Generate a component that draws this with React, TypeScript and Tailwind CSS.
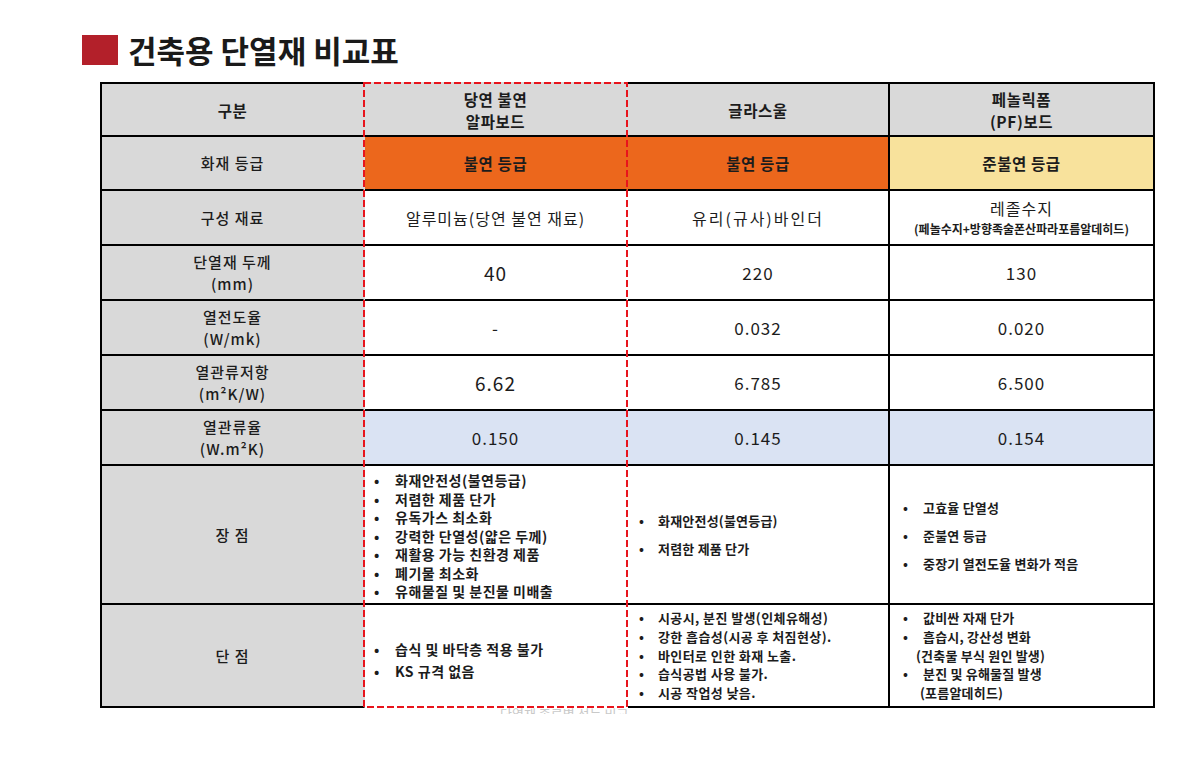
import { ReactNode } from "react";

const GRAY = "bg-[#d9d9d9]";
const ORANGE = "bg-[#ec671c]";
const YELLOW = "bg-[#f8e29c]";
const BLUE = "bg-[#dae3f3]";
const WHITE = "bg-white";

// borders per column; col 1 and col 2 share the red dashed frame instead of black lines
const colBorders = [
  "border-l-2 border-l-black border-r-2 border-r-transparent",
  "border-r-2 border-r-transparent",
  "border-r-2 border-r-black",
  "border-r-2 border-r-black",
];

interface CellProps {
  col: number;
  row: number;
  bg: string;
  children?: ReactNode;
  className?: string;
}

const LAST_ROW = 8;

function Cell({ col, row, bg, children, className = "" }: CellProps) {
  const top =
    row === 0 ? (col === 1 ? "border-t-2 border-t-transparent" : "border-t-2 border-t-black") : "";
  const bottom =
    row === LAST_ROW && col === 1 ? "border-b-2 border-b-transparent" : "border-b-2 border-b-black";
  return (
    <div
      className={`box-border flex items-center justify-center text-center text-[#1c1c1c] ${bg} ${colBorders[col]} ${top} ${bottom} ${className}`}
    >
      {children}
    </div>
  );
}

function Label({ children }: { children: ReactNode }) {
  return <div className="text-[15px] leading-[22px] font-medium tracking-[1px]">{children}</div>;
}

function Head({ children }: { children: ReactNode }) {
  return <div className="text-[15.5px] leading-[22px] font-bold tracking-[0.6px]">{children}</div>;
}

function Value({ children, big = false }: { children: ReactNode; big?: boolean }) {
  return (
    <div className={`${big ? "text-[19px]" : "text-[17px]"} leading-[20px] tracking-[1px]`}>
      {children}
    </div>
  );
}

function BulletList({
  items,
  gap,
  lineHeight,
  bulletWidth,
  size = "text-[13px] tracking-[0.2px]",
}: {
  items: { text: string; sub?: string; subIndent?: string }[];
  gap: string;
  lineHeight: string;
  bulletWidth: string;
  size?: string;
}) {
  return (
    <div className={`flex flex-col ${gap} text-left ${size} font-semibold ${lineHeight}`}>
      {items.map((it) => (
        <div key={it.text}>
          <div className="flex">
            <span className={`${bulletWidth} shrink-0 tracking-normal`}>•</span>
            <span>{it.text}</span>
          </div>
          {it.sub && <div className={it.subIndent}>{it.sub}</div>}
        </div>
      ))}
    </div>
  );
}

export default function App() {
  return (
    <div className="w-[1200px] h-[766px] overflow-hidden bg-white font-['Noto_Sans_CJK_KR','Noto_Sans',sans-serif]">
      <div className="pt-[35px] pl-[82px] flex items-center gap-[10px]">
        <div className="w-[36px] h-[30px] bg-[#b3202a]" />
        <h1 className="text-[31px] leading-[30px] font-bold text-[#1a1a1a]">건축용 단열재 비교표</h1>
      </div>

      <div className="relative mt-[17px] ml-[100px] w-[1055px]">
        <div className="grid grid-cols-[265px_263px_262px_265px] grid-rows-[55px_54px_55px_55px_55px_55px_55px_139px_103px]">
          {/* 구분 */}
          <Cell col={0} row={0} bg={GRAY}>
            <Head>구분</Head>
          </Cell>
          <Cell col={1} row={0} bg={GRAY}>
            <Head>
              당연 불연
              <br />
              알파보드
            </Head>
          </Cell>
          <Cell col={2} row={0} bg={GRAY}>
            <Head>글라스울</Head>
          </Cell>
          <Cell col={3} row={0} bg={GRAY}>
            <Head>
              페놀릭폼
              <br />
              (PF)보드
            </Head>
          </Cell>

          {/* 화재 등급 */}
          <Cell col={0} row={1} bg={GRAY}>
            <Label>화재 등급</Label>
          </Cell>
          <Cell col={1} row={1} bg={ORANGE}>
            <Head>불연 등급</Head>
          </Cell>
          <Cell col={2} row={1} bg={ORANGE}>
            <Head>불연 등급</Head>
          </Cell>
          <Cell col={3} row={1} bg={YELLOW}>
            <Head>준불연 등급</Head>
          </Cell>

          {/* 구성 재료 */}
          <Cell col={0} row={2} bg={GRAY}>
            <Label>구성 재료</Label>
          </Cell>
          <Cell col={1} row={2} bg={WHITE}>
            <div className="text-[16px] tracking-[1px]">알루미늄(당연 불연 재료)</div>
          </Cell>
          <Cell col={2} row={2} bg={WHITE}>
            <div className="text-[16px] tracking-[2px]">유리(규사)바인더</div>
          </Cell>
          <Cell col={3} row={2} bg={WHITE}>
            <div>
              <div className="text-[16px] leading-[23px] tracking-[1px]">레졸수지</div>
              <div className="text-[12px] leading-[18px] font-bold">(페놀수지+방향족술폰산파라포름알데히드)</div>
            </div>
          </Cell>

          {/* 단열재 두께 */}
          <Cell col={0} row={3} bg={GRAY}>
            <Label>
              단열재 두께
              <br />
              (mm)
            </Label>
          </Cell>
          <Cell col={1} row={3} bg={WHITE}>
            <Value big>40</Value>
          </Cell>
          <Cell col={2} row={3} bg={WHITE}>
            <Value>220</Value>
          </Cell>
          <Cell col={3} row={3} bg={WHITE}>
            <Value>130</Value>
          </Cell>

          {/* 열전도율 */}
          <Cell col={0} row={4} bg={GRAY}>
            <Label>
              열전도율
              <br />
              (W/mk)
            </Label>
          </Cell>
          <Cell col={1} row={4} bg={WHITE}>
            <Value>-</Value>
          </Cell>
          <Cell col={2} row={4} bg={WHITE}>
            <Value>0.032</Value>
          </Cell>
          <Cell col={3} row={4} bg={WHITE}>
            <Value>0.020</Value>
          </Cell>

          {/* 열관류저항 */}
          <Cell col={0} row={5} bg={GRAY}>
            <Label>
              열관류저항
              <br />
              (m²K/W)
            </Label>
          </Cell>
          <Cell col={1} row={5} bg={WHITE}>
            <Value big>6.62</Value>
          </Cell>
          <Cell col={2} row={5} bg={WHITE}>
            <Value>6.785</Value>
          </Cell>
          <Cell col={3} row={5} bg={WHITE}>
            <Value>6.500</Value>
          </Cell>

          {/* 열관류율 */}
          <Cell col={0} row={6} bg={GRAY}>
            <Label>
              열관류율
              <br />
              (W.m²K)
            </Label>
          </Cell>
          <Cell col={1} row={6} bg={BLUE}>
            <Value>0.150</Value>
          </Cell>
          <Cell col={2} row={6} bg={BLUE}>
            <Value>0.145</Value>
          </Cell>
          <Cell col={3} row={6} bg={BLUE}>
            <Value>0.154</Value>
          </Cell>

          {/* 장점 */}
          <Cell col={0} row={7} bg={GRAY}>
            <Label>장 점</Label>
          </Cell>
          <Cell col={1} row={7} bg={WHITE} className="!justify-start pl-[9px] pt-[3px]">
            <BulletList
              gap="gap-0"
              lineHeight="leading-[18.5px]"
              bulletWidth="w-[21px]"
              size="text-[14px] tracking-[0.5px]"
              items={[
                { text: "화재안전성(불연등급)" },
                { text: "저렴한 제품 단가" },
                { text: "유독가스 최소화" },
                { text: "강력한 단열성(얇은 두께)" },
                { text: "재활용 가능 친환경 제품" },
                { text: "폐기물 최소화" },
                { text: "유해물질 및 분진물 미배출" },
              ]}
            />
          </Cell>
          <Cell col={2} row={7} bg={WHITE} className="!justify-start pl-[11px]">
            <BulletList
              gap="gap-[10px]"
              lineHeight="leading-[18px]"
              bulletWidth="w-[19px]"
              items={[{ text: "화재안전성(불연등급)" }, { text: "저렴한 제품 단가" }]}
            />
          </Cell>
          <Cell col={3} row={7} bg={WHITE} className="!justify-start pl-[13px] pt-[2px]">
            <BulletList
              gap="gap-[10px]"
              lineHeight="leading-[18px]"
              bulletWidth="w-[20px]"
              items={[
                { text: "고효율 단열성" },
                { text: "준불연 등급" },
                { text: "중장기 열전도율 변화가 적음" },
              ]}
            />
          </Cell>

          {/* 단점 */}
          <Cell col={0} row={8} bg={GRAY}>
            <Label>단 점</Label>
          </Cell>
          <Cell col={1} row={8} bg={WHITE} className="!justify-start pl-[9px] pt-[8px]">
            <BulletList
              gap="gap-[4px]"
              lineHeight="leading-[18px]"
              bulletWidth="w-[21px]"
              size="text-[14px] tracking-[0.5px]"
              items={[{ text: "습식 및 바닥층 적용 불가" }, { text: "KS 규격 없음" }]}
            />
          </Cell>
          <Cell col={2} row={8} bg={WHITE} className="!justify-start pl-[11px] pt-[1px]">
            <BulletList
              gap="gap-0"
              lineHeight="leading-[18.8px]"
              bulletWidth="w-[19px]"
              size="text-[13px] tracking-[0.4px]"
              items={[
                { text: "시공시, 분진 발생(인체유해성)" },
                { text: "강한 흡습성(시공 후 처짐현상)." },
                { text: "바인터로 인한 화재 노출." },
                { text: "습식공법 사용 불가." },
                { text: "시공 작업성 낮음." },
              ]}
            />
          </Cell>
          <Cell col={3} row={8} bg={WHITE} className="!justify-start pl-[13px] pt-[1px]">
            <BulletList
              gap="gap-0"
              lineHeight="leading-[18.8px]"
              bulletWidth="w-[20px]"
              items={[
                { text: "값비싼 자재 단가" },
                { text: "흡습시, 강산성 변화", sub: "(건축물 부식 원인 발생)", subIndent: "pl-[13px]" },
                { text: "분진 및 유해물질 발생", sub: "(포름알데히드)", subIndent: "pl-[17px]" },
              ]}
            />
          </Cell>
        </div>

        {/* red dashed highlight around 알파보드 column */}
        <svg
          className="pointer-events-none absolute top-0 left-[263px] w-[265px] h-full overflow-visible"
          preserveAspectRatio="none"
        >
          <rect
            x="1"
            y="1"
            width="263"
            height="624"
            fill="none"
            stroke="#e8141c"
            strokeWidth="2"
            strokeDasharray="7 3"
          />
        </svg>
      </div>

      <div className="h-[6px] overflow-hidden pl-[500px] text-[13px] leading-[14px] text-[#c9c9c9]">
        <div className="-mt-[1px]">단열재 종류별 성능 비교</div>
      </div>
    </div>
  );
}
